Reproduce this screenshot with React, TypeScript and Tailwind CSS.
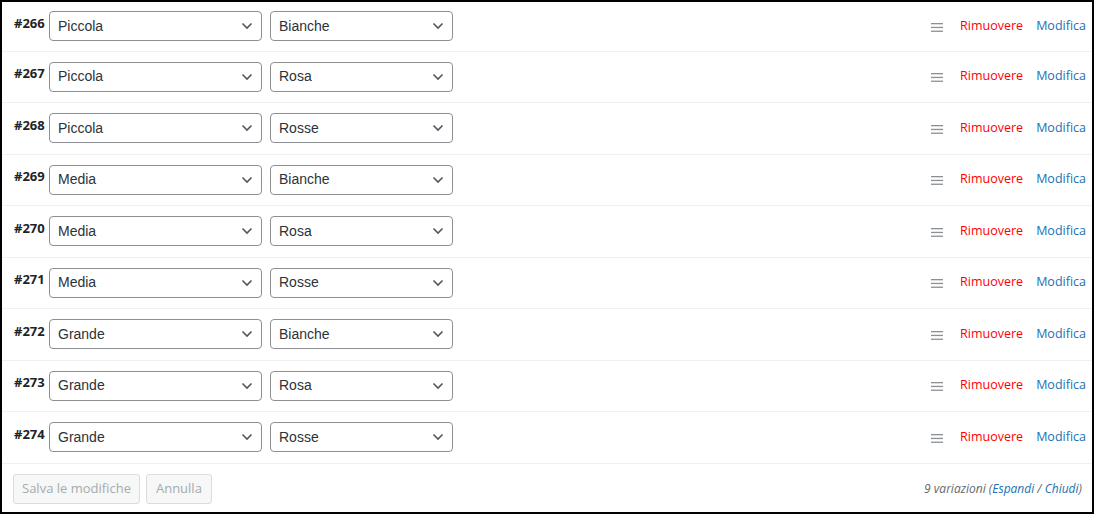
import React from 'react';

// Variations list: one row per variation with two attribute selects and actions.

const ROWS: { id: number; size: string; color: string }[] = [
  { id: 266, size: 'Piccola', color: 'Bianche' },
  { id: 267, size: 'Piccola', color: 'Rosa' },
  { id: 268, size: 'Piccola', color: 'Rosse' },
  { id: 269, size: 'Media', color: 'Bianche' },
  { id: 270, size: 'Media', color: 'Rosa' },
  { id: 271, size: 'Media', color: 'Rosse' },
  { id: 272, size: 'Grande', color: 'Bianche' },
  { id: 273, size: 'Grande', color: 'Rosa' },
  { id: 274, size: 'Grande', color: 'Rosse' },
];

const ui = { fontFamily: '"Open Sans", "Noto Sans", sans-serif' };
const arial = { fontFamily: '"Liberation Sans", Arial, sans-serif' };

function FakeSelect({ value, width }: { value: string; width: string }) {
  return (
    <div
      className={`${width} h-[30px] flex items-center justify-between pl-[8px] pr-[8px] border border-[#8c8f94] rounded-[4px] bg-white text-[14px] text-[#2c3338]`}
      style={arial}
    >
      <span>{value}</span>
      <svg width="12" height="8" viewBox="0 0 12 8">
        <path d="M1.5 1.5 L6 6 L10.5 1.5" fill="none" stroke="#50575e" strokeWidth="1.6" />
      </svg>
    </div>
  );
}

export default function App() {
  return (
    <div className="w-[1094px] h-[514px] border-2 border-black bg-white flex flex-col overflow-hidden">
      {ROWS.map((r, i) => (
        <div
          key={r.id}
          className={`flex items-center border-b border-[#f0f0f1] pl-[12px] pr-[6px] ${i === 0 ? 'h-[49.5px]' : 'h-[51.5px]'}`}
        >
          <span className="text-[13px] font-bold text-[#1d2327] w-[35px] -mt-[6px]" style={ui}>
            #{r.id}
          </span>
          <div className="flex gap-[8px]">
            <FakeSelect value={r.size} width="w-[213px]" />
            <FakeSelect value={r.color} width="w-[183px]" />
          </div>
          <div className="ml-auto flex items-center text-[12.5px]" style={ui}>
            <svg width="12" height="9" viewBox="0 0 12 9" className="mr-[17px] mt-[2px]">
              <rect x="0" y="0" width="12" height="1.3" fill="#8c8f94" />
              <rect x="0" y="3.8" width="12" height="1.3" fill="#8c8f94" />
              <rect x="0" y="7.6" width="12" height="1.3" fill="#8c8f94" />
            </svg>
            <span className="text-[#ff0000] mr-[13px]">Rimuovere</span>
            <span className="text-[#2271b1]">Modifica</span>
          </div>
        </div>
      ))}
      <div className="flex-1 flex items-center pl-[11px] pr-[10px] pt-[2px]">
        <div className="flex gap-[6px] text-[13px] text-[#a7aaad]" style={ui}>
          <div className="h-[30px] px-[8px] flex items-center border border-[#dcdcde] bg-[#f6f7f7] rounded-[3px]">
            Salva le modifiche
          </div>
          <div className="h-[30px] px-[9px] flex items-center border border-[#dcdcde] bg-[#f6f7f7] rounded-[3px]">
            Annulla
          </div>
        </div>
        <div className="ml-auto text-[12px] italic text-[#646970]" style={ui}>
          9 variazioni (<span className="text-[#2271b1]">Espandi</span> / <span className="text-[#2271b1]">Chiudi</span>)
        </div>
      </div>
    </div>
  );
}
